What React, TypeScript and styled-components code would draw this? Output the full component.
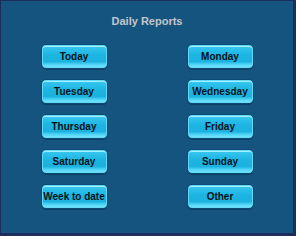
import styled, { createGlobalStyle } from "styled-components";

const GlobalStyle = createGlobalStyle`
  html, body {
    margin: 0;
    padding: 0;
    background: #15547f;
  }
`;

const Frame = styled.div`
  width: 296px;
  height: 236px;
  box-sizing: border-box;
  background: #15547f;
  border-style: solid;
  border-color: #1d2d5e;
  border-width: 1px 3px 3px 1px;
  display: flex;
  flex-direction: column;
  align-items: center;
  font-family: "Liberation Sans", Arial, sans-serif;
`;

const Title = styled.h1`
  margin: 14px 0 0;
  font-size: 11px;
  line-height: 13px;
  font-weight: bold;
  color: #c3c7cc;
`;

const Grid = styled.div`
  margin-top: 16px;
  display: grid;
  grid-template-columns: 67px 67px;
  column-gap: 79px;
  row-gap: 10px;
`;

const ReportButton = styled.button`
  width: 67px;
  height: 25px;
  box-sizing: border-box;
  padding: 0;
  border: 1px solid #0a4a74;
  border-radius: 5px;
  background: linear-gradient(
    to bottom,
    #3fcaf0 0%,
    #2cc0ea 20%,
    #1db4e2 45%,
    #1bb2e0 72%,
    #4cd3f5 84%,
    #86e7fb 100%
  );
  box-shadow: inset 0 0 0 1px #63d9f8, inset 0 2px 0 #a6effd,
    0 1px 0 #0d3f66;
  font-family: "Liberation Sans", Arial, sans-serif;
  font-size: 10px;
  font-weight: bold;
  color: #03121a;
  white-space: nowrap;
  cursor: pointer;
`;

const days = [
  ["Today", "Monday"],
  ["Tuesday", "Wednesday"],
  ["Thursday", "Friday"],
  ["Saturday", "Sunday"],
  ["Week to date", "Other"],
];

export default function App() {
  return (
    <>
      <GlobalStyle />
      <Frame>
        <Title>Daily Reports</Title>
        <Grid>
          {days.flat().map((label) => (
            <ReportButton key={label}>{label}</ReportButton>
          ))}
        </Grid>
      </Frame>
    </>
  );
}
